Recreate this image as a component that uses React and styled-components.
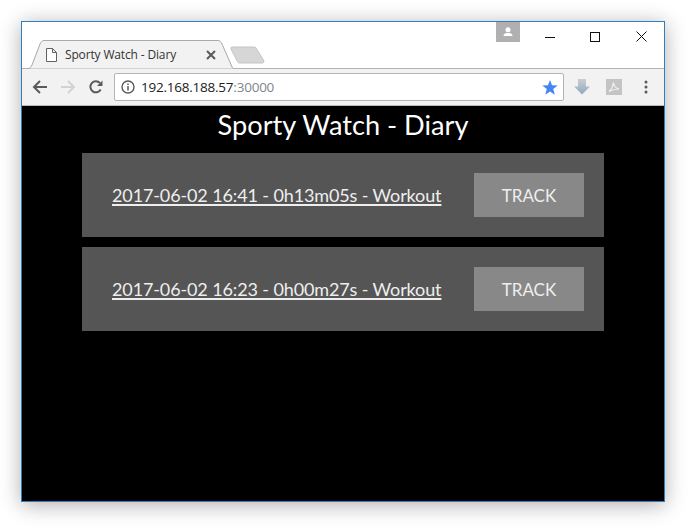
import React from 'react';
import styled, { createGlobalStyle } from 'styled-components';

const GlobalStyle = createGlobalStyle`
  html, body {
    margin: 0;
    padding: 0;
    background: #fff;
  }
`;

const Desktop = styled.div`
  width: 691px;
  height: 528px;
  padding: 21px 0 0 21px;
  box-sizing: border-box;
  overflow: hidden;
`;

const Window = styled.div`
  width: 644px;
  height: 481px;
  box-sizing: border-box;
  border: 1px solid #2b7fc4;
  display: flex;
  flex-direction: column;
  background: #fff;
  box-shadow: 0 3px 20px rgba(0, 0, 0, 0.32);
`;

const TitleBar = styled.div`
  height: 47px;
  flex: none;
  box-sizing: border-box;
  border-bottom: 1px solid #b2b2b2;
  display: flex;
  justify-content: space-between;
`;

const TabStrip = styled.div`
  display: flex;
  align-items: flex-end;
  height: 47px;
  padding-left: 5px;
`;

const Tab = styled.div`
  position: relative;
  width: 206px;
  height: 29px;
  box-sizing: border-box;
  padding: 0 17px 0 19px;
  display: flex;
  align-items: center;
  gap: 8px;
  font: 12px "Open Sans", sans-serif;
  letter-spacing: -0.15px;
  color: #333;
`;

const TabShape = styled.svg`
  position: absolute;
  left: 0;
  top: 0;
`;

const TabIcon = styled.svg`
  position: relative;
  flex: none;
`;

const TabTitle = styled.span`
  position: relative;
  flex: 1;
  white-space: nowrap;
`;

const NewTab = styled.svg`
  margin: 0 0 5px -3px;
`;

const WindowArea = styled.div`
  display: flex;
  align-items: flex-start;
`;

const Avatar = styled.div`
  width: 24px;
  height: 20px;
  background: #b0b0b0;
  display: flex;
  align-items: center;
  justify-content: center;
  margin-right: 6px;
`;

const WindowButton = styled.div`
  width: 46px;
  height: 29px;
  display: flex;
  align-items: center;
  justify-content: center;
`;

const Toolbar = styled.div`
  height: 37px;
  flex: none;
  box-sizing: border-box;
  background: #f2f2f2;
  border-bottom: 1px solid #b8b8b8;
  padding-left: 4px;
  display: flex;
  align-items: center;
  gap: 4px;
`;

const ButtonGroup = styled.div`
  display: flex;
  align-items: center;
  gap: ${(props) => props.$gap || 0}px;
`;

const ToolButton = styled.div`
  width: 28px;
  height: 28px;
  display: flex;
  align-items: center;
  justify-content: center;
`;

const Omnibox = styled.div`
  width: 450px;
  height: 28px;
  box-sizing: border-box;
  background: #fff;
  border: 1px solid #b4b4b4;
  border-radius: 2px;
  padding: 0 5px 0 6px;
  display: flex;
  align-items: center;
  gap: 6px;
  font: 13.5px "Open Sans", sans-serif;
  letter-spacing: -0.23px;
  color: #222;
`;

const InfoIcon = styled.svg`
  flex: none;
`;

const Url = styled.span`
  flex: 1;
  white-space: nowrap;
`;

const Port = styled.span`
  color: #80868b;
`;

const Page = styled.main`
  flex: 1;
  background: #000;
  padding: 0 60px;
  display: flex;
  flex-direction: column;
  gap: 10px;
  font-family: Lato, "Open Sans", sans-serif;
`;

const Heading = styled.h1`
  margin: 0;
  height: 37px;
  line-height: 37px;
  text-align: center;
  font-size: 27.2px;
  font-weight: 400;
  color: #fff;
`;

const Entry = styled.div`
  height: 84px;
  box-sizing: border-box;
  background: #555;
  padding: 0 20px 0 30px;
  display: flex;
  align-items: center;
  justify-content: space-between;
`;

const EntryLink = styled.a`
  font-size: 18px;
  letter-spacing: -0.12px;
  color: #eee;
  text-decoration: underline;
  text-decoration-thickness: 2px;
  text-underline-offset: 2px;
  white-space: nowrap;
`;

const TrackButton = styled.div`
  width: 110px;
  height: 44px;
  background: #888;
  color: #eee;
  font-size: 17px;
  display: flex;
  align-items: center;
  justify-content: center;
`;

const entries = [
  '2017-06-02 16:41 - 0h13m05s - Workout',
  '2017-06-02 16:23 - 0h00m27s - Workout',
];

const App = () => {
  return (
    <Desktop>
      <GlobalStyle />
      <Window>
        <TitleBar>
          <TabStrip>
            <Tab>
              <TabShape width="206" height="29" viewBox="0 0 206 29">
                <path d="M0 28.5 L1 28.5 C3 28.5 4 27 5 25 L13 4 C14 2 15 .5 17 .5 L191 .5 C193 .5 194 2 195 4 L205 25 C206 27 206 28 206 28.5 Z" fill="#f2f2f2" />
                <path d="M0 28.5 L1 28.5 C3 28.5 4 27 5 25 L13 4 C14 2 15 .5 17 .5 L191 .5 C193 .5 194 2 195 4 L205.5 28" fill="none" stroke="#a9a9a9" />
              </TabShape>
              <TabIcon width="11" height="14" viewBox="0 0 11 14">
                <path d="M.5 .5 H6.500 L10.500 4.500 V13.500 H.5 Z M6.500 .5 V4.500 H10.500" fill="#fff" stroke="#5f6368" />
              </TabIcon>
              <TabTitle>Sporty Watch - Diary</TabTitle>
              <TabIcon width="10" height="10" viewBox="0 0 10 10">
                <path d="M1 1 L9 9 M9 1 L1 9" stroke="#5a5a5a" strokeWidth="2" />
              </TabIcon>
            </Tab>
            <NewTab width="36" height="18" viewBox="0 0 36 18">
              <path d="M2 1 H24 C25 1 25.500 1.300 26 2 L33.500 14 C34.500 16 33.500 17 32 17 H10 C8.500 17 8 16.500 7.500 15.500 L1 3 C.5 2 1 1 2 1 Z" fill="#d6d6d6" stroke="#c4c4c4" />
            </NewTab>
          </TabStrip>
          <WindowArea>
            <Avatar>
              <svg width="12" height="10" viewBox="0 0 12 10">
                <circle cx="6" cy="2.700" r="2.500" fill="#fff" />
                <path d="M1.500 9 C1.500 6.500 4 6 6 6 C8 6 10.500 6.500 10.500 9 Z" fill="#fff" />
              </svg>
            </Avatar>
            <WindowButton>
              <svg width="12" height="10" viewBox="0 0 12 10">
                <path d="M2 5.500 H12" stroke="#111" />
              </svg>
            </WindowButton>
            <WindowButton>
              <svg width="10" height="10" viewBox="0 0 10 10">
                <rect x=".5" y=".5" width="9" height="9" fill="none" stroke="#111" />
              </svg>
            </WindowButton>
            <WindowButton>
              <svg width="11" height="11" viewBox="0 0 11 11">
                <path d="M.5 .5 L10.500 10.500 M10.500 .5 L.5 10.500" stroke="#111" />
              </svg>
            </WindowButton>
          </WindowArea>
        </TitleBar>
        <Toolbar>
          <ButtonGroup>
            <ToolButton>
              <svg width="16" height="14" viewBox="0 0 16 14">
                <path d="M15 7 H2 M8 1 L2 7 L8 13" fill="none" stroke="#5a5a5a" strokeWidth="2" />
              </svg>
            </ToolButton>
            <ToolButton>
              <svg width="16" height="14" viewBox="0 0 16 14">
                <path d="M1 7 H14 M8 1 L14 7 L8 13" fill="none" stroke="#d2d2d2" strokeWidth="2" />
              </svg>
            </ToolButton>
            <ToolButton>
              <svg width="14" height="14" viewBox="0 0 14 14">
                <path d="M11.700 9.500 A5.500 5.500 0 1 1 11 3.200" fill="none" stroke="#5a5a5a" strokeWidth="2" />
                <path d="M13.500 0.500 V6 H8 Z" fill="#5a5a5a" />
              </svg>
            </ToolButton>
          </ButtonGroup>
          <Omnibox>
            <InfoIcon width="14" height="14" viewBox="0 0 14 14">
              <circle cx="7" cy="7" r="6" fill="none" stroke="#5a5a5a" strokeWidth="1.400" />
              <path d="M7 6 V10.500 M7 3.500 V5" stroke="#5a5a5a" strokeWidth="1.500" />
            </InfoIcon>
            <Url>192.168.188.57<Port>:30000</Port></Url>
            <svg width="16" height="15" viewBox="0 0 16 15">
              <path d="M8 0 L10 5.300 L15.700 5.600 L11.200 9.100 L12.800 14.700 L8 11.500 L3.200 14.700 L4.800 9.100 L.3 5.600 L6 5.300 Z" fill="#4285f4" />
            </svg>
          </Omnibox>
          <ButtonGroup $gap={4}>
            <ToolButton>
              <svg width="16" height="16" viewBox="0 0 16 16">
                <defs>
                  <linearGradient id="dl" x1="0" y1="0" x2="0" y2="1">
                    <stop offset="0" stopColor="#c9ced3" />
                    <stop offset="1" stopColor="#8fa9bb" />
                  </linearGradient>
                </defs>
                <path d="M4 0 H12 V7.500 H16 L8 15.500 L0 7.500 H4 Z" fill="url(#dl)" />
              </svg>
            </ToolButton>
            <ToolButton>
              <svg width="16" height="16" viewBox="0 0 16 16">
                <rect width="16" height="16" fill="#c4c4c4" />
                <path d="M3 12.500 C5 11 7 7 7.500 3.500 C8 7 10 9.500 13 10 C10 10 6 11 3 12.500 Z" fill="none" stroke="#f0f0f0" strokeWidth="1.200" />
              </svg>
            </ToolButton>
            <ToolButton>
              <svg width="4" height="14" viewBox="0 0 4 14">
                <circle cx="2" cy="2" r="1.500" fill="#5a5a5a" />
                <circle cx="2" cy="7" r="1.500" fill="#5a5a5a" />
                <circle cx="2" cy="12" r="1.500" fill="#5a5a5a" />
              </svg>
            </ToolButton>
          </ButtonGroup>
        </Toolbar>
        <Page>
          <Heading>Sporty Watch - Diary</Heading>
          {entries.map((entry) => (
            <Entry key={entry}>
              <EntryLink>{entry}</EntryLink>
              <TrackButton>TRACK</TrackButton>
            </Entry>
          ))}
        </Page>
      </Window>
    </Desktop>
  );
};

export default App;
